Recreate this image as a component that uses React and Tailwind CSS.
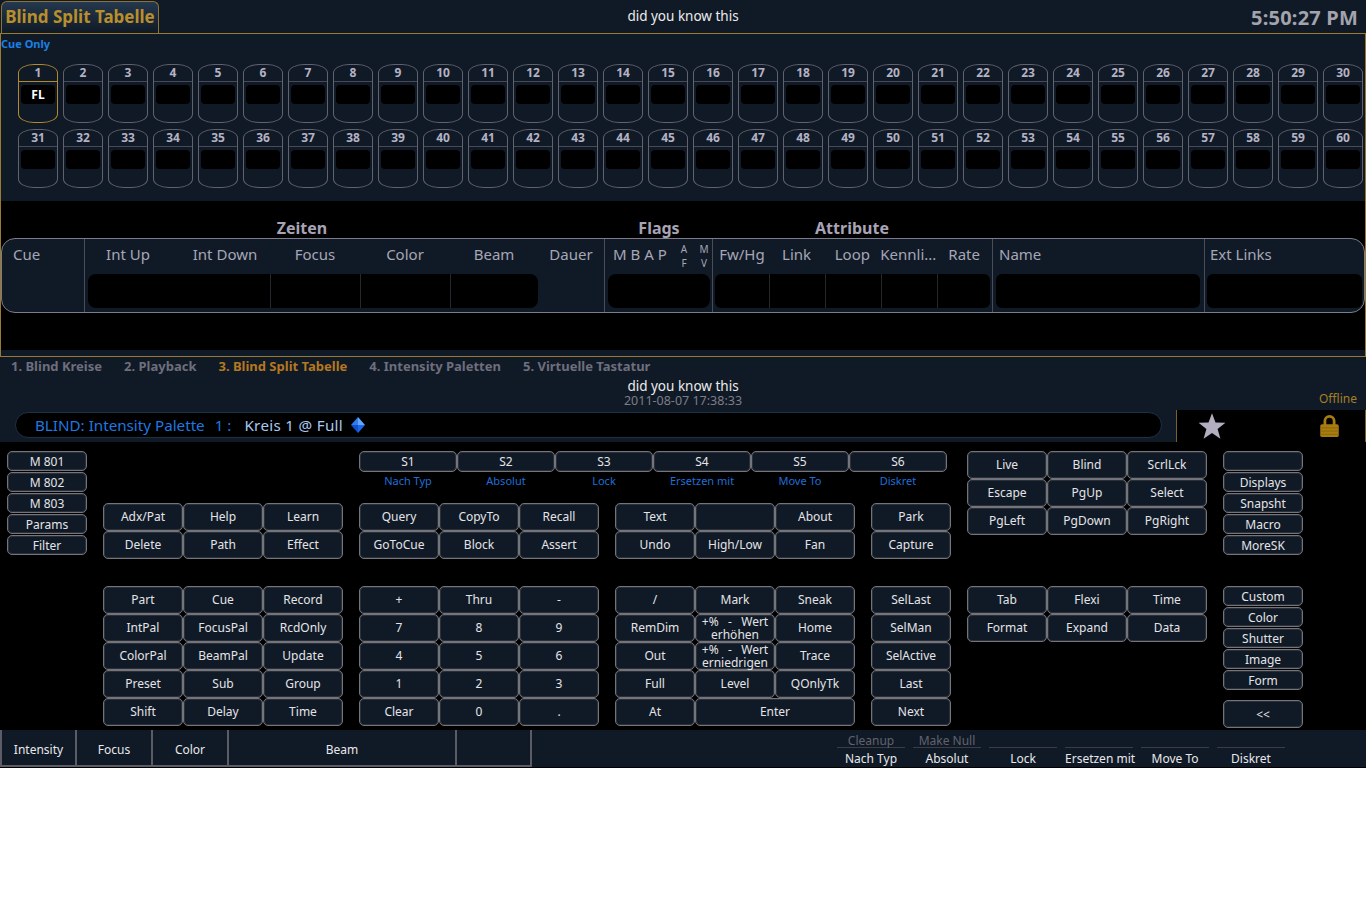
import React from "react";

const CUE_ROWS = [
  Array.from({ length: 30 }, (_, i) => i + 1),
  Array.from({ length: 30 }, (_, i) => i + 31),
];

const CueCell = ({ num, active, label }) => (
  <div
    className={`h-[59px] w-10 rounded-[16px/9px] border ${
      active ? "border-[#b08a2c]" : "border-[#62626e]"
    }`}
  >
    <div
      className={`h-[17px] border-b text-center text-[12px] font-bold leading-[16px] text-[#b4b2c4] ${
        active ? "border-[#b08a2c]" : "border-[#4a4a56]"
      }`}
    >
      {num}
    </div>
    <div className="mx-[2px] mt-[3px] flex h-[19px] items-center justify-center rounded-[4px] bg-black text-[12px] font-bold text-white">
      {label}
    </div>
  </div>
);

const Key = ({ children, className = "" }) => (
  <div
    className={`flex h-full items-center justify-center rounded-[5px] border border-[#74747c] bg-[#101a26] text-center text-[12px] leading-[13px] text-[#e4e4e8] shadow-[inset_0_0_0_1px_#2b3038] ${className}`}
  >
    {children}
  </div>
);

const KeyGrid = ({ keys, cols = "grid-cols-3", width = "w-[240px]" }) => (
  <div className={`grid ${cols} ${width} auto-rows-[28px]`}>
    {keys.map((k, i) => (
      <Key key={i} className={k === "Enter" ? "col-span-2 pb-[2px]" : "pb-[2px]"}>
        {k}
      </Key>
    ))}
  </div>
);

const SmallKeys = ({ keys }) => (
  <div className="flex flex-col gap-[1px]">
    {keys.map((k, i) => (
      <div key={i} className="h-[20px]">
        <Key>{k}</Key>
      </div>
    ))}
  </div>
);

const softKeys = ["S1", "S2", "S3", "S4", "S5", "S6"];
const softLabels = ["Nach Typ", "Absolut", "Lock", "Ersetzen mit", "Move To", "Diskret"];

const WertKey = ({ line2 }) => (
  <span className="block pt-[2px] leading-[13px]">
    +%&nbsp;&nbsp; - &nbsp;&nbsp;Wert
    <br />
    {line2}
  </span>
);

const HeadLabel = ({ className = "", children }) => (
  <div className={`text-[15px] leading-[31px] text-[#a6a6b6] ${className}`}>{children}</div>
);

const CueTable = () => (
  <div className="flex h-[75px] overflow-hidden rounded-[14px] border border-[#7c7c8a] bg-[#101a26]">
    <div className="w-[82px] shrink-0 pl-[11px]">
      <HeadLabel>Cue</HeadLabel>
    </div>

    <div className="w-[520px] shrink-0 border-l border-[#4c4c58] pl-[3px]">
      <div className="flex h-[35px] text-center">
        <HeadLabel className="w-[80px]">Int Up</HeadLabel>
        <HeadLabel className="ml-[12px] w-[90px]">Int Down</HeadLabel>
        <HeadLabel className="w-[90px]">Focus</HeadLabel>
        <HeadLabel className="w-[90px]">Color</HeadLabel>
        <HeadLabel className="w-[88px]">Beam</HeadLabel>
        <HeadLabel className="w-[66px]">Dauer</HeadLabel>
      </div>
      <div className="flex h-[34px] w-[450px] overflow-hidden rounded-[8px] bg-black">
        <div className="w-[182px]" />
        <div className="w-[90px] border-l border-[#26262c]" />
        <div className="w-[90px] border-l border-[#26262c]" />
        <div className="w-[88px] border-l border-[#26262c]" />
      </div>
    </div>

    <div className="w-[108px] shrink-0 border-l border-[#4c4c58] pl-[3px]">
      <div className="flex h-[35px] items-start">
        <HeadLabel className="ml-[5px] w-[60px] whitespace-nowrap">M B A P</HeadLabel>
        <div className="ml-[6px] mt-[3px] w-[10px] text-center text-[10px] leading-[14px] text-[#a6a6b6]">
          A<br />F
        </div>
        <div className="ml-[10px] mt-[3px] w-[10px] text-center text-[10px] leading-[14px] text-[#a6a6b6]">
          M<br />V
        </div>
      </div>
      <div className="h-[34px] w-[102px] rounded-[8px] bg-black" />
    </div>

    <div className="w-[280px] shrink-0 border-l border-[#4c4c58] pl-[2px]">
      <div className="flex h-[35px] text-center">
        {["Fw/Hg", "Link", "Loop", "Kennli...", "Rate"].map((t, i) => (
          <HeadLabel key={t} className={i === 0 ? "w-[54px]" : "w-[56px]"}>
            {t}
          </HeadLabel>
        ))}
      </div>
      <div className="flex h-[34px] w-[275px] rounded-[6px] bg-black">
        <div className="w-[54px]" />
        <div className="w-[56px] border-l border-[#26262c]" />
        <div className="w-[56px] border-l border-[#26262c]" />
        <div className="w-[56px] border-l border-[#26262c]" />
        <div className="w-[53px] border-l border-[#26262c]" />
      </div>
    </div>

    <div className="w-[212px] shrink-0 border-l border-[#4c4c58] pl-[3px]">
      <HeadLabel className="h-[35px] pl-[3px]">Name</HeadLabel>
      <div className="h-[34px] w-[204px] rounded-[6px] bg-black" />
    </div>

    <div className="flex-1 border-l border-[#4c4c58] pl-[2px]">
      <HeadLabel className="h-[35px] pl-[3px]">Ext Links</HeadLabel>
      <div className="h-[34px] w-[155px] rounded-[6px] bg-black" />
    </div>
  </div>
);

export default function App() {
  return (
    <div className="min-h-[913px] bg-white font-['Noto_Sans',sans-serif]">
      <div className="h-[768px] w-[1366px] overflow-hidden border-b border-black bg-[#101a26]">
        {/* top bar */}
        <div className="grid h-[33px] grid-cols-[1fr_auto_1fr] items-start">
          <div className="pl-[1px] pt-[1px]">
            <div className="flex h-[32px] w-[158px] items-center justify-center whitespace-nowrap rounded-t-[6px] border-x border-t border-[#8f7330] bg-gradient-to-b from-[#25384e] to-[#101a26] pb-[2px] text-[17px] font-bold text-[#b98f2c]">
              Blind Split Tabelle
            </div>
          </div>
          <div className="pt-[6px] text-[13.5px] leading-[20px] text-[#ececec]">did you know this</div>
          <div className="pr-2 pt-[6px] text-right text-[20px] font-bold leading-[24px] tracking-[0.2px] text-[#a3a3ad]">
            5:50:27 PM
          </div>
        </div>

        {/* blind split panel */}
        <div className="h-[324px] border border-[#9a7a30]">
          <div className="h-[167px]">
            <div className="pl-0 pt-[3px] text-[11px] font-bold leading-[14px] text-[#1c7fe6]">Cue Only</div>
            <div className="mt-[13px] flex flex-col gap-[6px] pl-[17px]">
              {CUE_ROWS.map((row, r) => (
                <div key={r} className="flex gap-[5px]">
                  {row.map((n) => (
                    <CueCell key={n} num={n} active={n === 1} label={n === 1 ? "FL" : ""} />
                  ))}
                </div>
              ))}
            </div>
          </div>
          <div className="h-[149px] bg-black pt-[17px]">
            <div className="grid h-[20px] grid-cols-[83px_436px_84px_110px_276px] text-center text-[16px] font-bold leading-[20px] text-[#a8a4b6]">
              <div />
              <div>Zeiten</div>
              <div />
              <div>Flags</div>
              <div>Attribute</div>
            </div>
            <CueTable />
          </div>
        </div>

        {/* page tabs + message */}
        <div className="flex h-[20px] gap-[22px] pl-[11px] text-[13px] font-bold leading-[19px] text-[#6e6e7c]">
          <span>1. Blind Kreise</span>
          <span>2. Playback</span>
          <span className="text-[#b5781f]">3. Blind Split Tabelle</span>
          <span>4. Intensity Paletten</span>
          <span>5. Virtuelle Tastatur</span>
        </div>
        <div className="flex h-[33px] flex-col items-center">
          <div className="text-[13.5px] leading-[18px] text-[#ececec]">did you know this</div>
          <div className="mt-[1px] text-[12.5px] leading-[10px] text-[#7d7d86]">2011-08-07 17:38:33</div>
        </div>

        {/* command line */}
        <div className="flex h-[32px] items-end">
          <div className="mb-[4px] ml-[15px] flex h-[26px] w-[1147px] items-center rounded-full border border-[#1e3044] bg-black pl-[19px] text-[15.2px]">
            <span className="text-[#1f78e0]">BLIND: Intensity Palette</span>
            <span className="ml-[10px] text-[#1f78e0]">1 :</span>
            <span className="ml-[13px] tracking-[0.3px] text-[#a9c8f0]">Kreis 1 @ Full</span>
            <svg width="14" height="16" viewBox="0 0 14 16" className="ml-[8px]">
              <path d="M7 0 L14 8 L7 8 Z" fill="#63a5ff" />
              <path d="M7 0 L0 8 L7 8 Z" fill="#2f7bf0" />
              <path d="M0 8 L7 16 L7 8 Z" fill="#0f4fd0" />
              <path d="M14 8 L7 16 L7 8 Z" fill="#1f66e6" />
            </svg>
          </div>
          <div className="relative ml-[14px] flex h-[32px] flex-1 items-center border-x border-[#7a6226] bg-black">
            <div className="absolute right-[8px] top-[-19px] text-[12px] leading-[16px] text-[#a67f24]">Offline</div>
            <svg width="28" height="28" viewBox="0 0 24 24" className="ml-[21px]">
              <path
                d="M12 1 L15 9 L23.5 9.3 L16.8 14.5 L19.2 23 L12 18 L4.8 23 L7.2 14.5 L0.5 9.3 L9 9 Z"
                fill="#b3aec0"
              />
            </svg>
            <svg width="21" height="24" viewBox="0 0 22 26" className="ml-[93px]">
              <path d="M6 12 V7.5 a5 5 0 0 1 10 0 V12" fill="none" stroke="#a87c10" strokeWidth="3" />
              <rect x="1" y="11" width="20" height="14" rx="2" fill="#a87c10" />
              <path d="M1 15 H21 M1 18.5 H21 M1 22 H21" stroke="#8c660c" strokeWidth="1" />
            </svg>
          </div>
        </div>

        {/* keypad */}
        <div className="flex h-[288px] gap-[16px] bg-black pl-[7px] pt-[9px]">
          <div className="w-[80px]">
            <SmallKeys keys={["M 801", "M 802", "M 803", "Params", "Filter"]} />
          </div>

          <div className="w-[240px] pt-[52px]">
            <KeyGrid keys={["Adx/Pat", "Help", "Learn", "Delete", "Path", "Effect"]} />
            <div className="mt-[27px]">
              <KeyGrid
                keys={[
                  "Part", "Cue", "Record",
                  "IntPal", "FocusPal", "RcdOnly",
                  "ColorPal", "BeamPal", "Update",
                  "Preset", "Sub", "Group",
                  "Shift", "Delay", "Time",
                ]}
              />
            </div>
          </div>

          <div className="w-[592px]">
            <div className="grid h-[21px] w-[588px] grid-cols-6">
              {softKeys.map((k) => (
                <Key key={k}>{k}</Key>
              ))}
            </div>
            <div className="grid h-[31px] w-[588px] grid-cols-6 pt-[2px] text-center text-[11px] leading-[14px] text-[#1e6fd8]">
              {softLabels.map((k) => (
                <div key={k}>{k}</div>
              ))}
            </div>
            <div className="flex gap-[16px]">
              <div className="w-[240px]">
                <KeyGrid keys={["Query", "CopyTo", "Recall", "GoToCue", "Block", "Assert"]} />
                <div className="mt-[27px]">
                  <KeyGrid
                    keys={["+", "Thru", "-", "7", "8", "9", "4", "5", "6", "1", "2", "3", "Clear", "0", "."]}
                  />
                </div>
              </div>
              <div className="w-[240px]">
                <KeyGrid keys={["Text", "", "About", "Undo", "High/Low", "Fan"]} />
                <div className="mt-[27px]">
                  <KeyGrid
                    keys={[
                      "/", "Mark", "Sneak",
                      "RemDim", <WertKey line2="erhöhen" />, "Home",
                      "Out", <WertKey line2="erniedrigen" />, "Trace",
                      "Full", "Level", "QOnlyTk",
                      "At", "Enter",
                    ]}
                  />
                </div>
              </div>
              <div className="w-[80px]">
                <KeyGrid cols="grid-cols-1" width="w-[80px]" keys={["Park", "Capture"]} />
                <div className="mt-[27px]">
                  <KeyGrid
                    cols="grid-cols-1"
                    width="w-[80px]"
                    keys={["SelLast", "SelMan", "SelActive", "Last", "Next"]}
                  />
                </div>
              </div>
            </div>
          </div>

          <div className="w-[240px]">
            <KeyGrid
              keys={["Live", "Blind", "ScrlLck", "Escape", "PgUp", "Select", "PgLeft", "PgDown", "PgRight"]}
            />
            <div className="mt-[51px]">
              <KeyGrid keys={["Tab", "Flexi", "Time", "Format", "Expand", "Data"]} />
            </div>
          </div>

          <div className="w-[80px]">
            <SmallKeys keys={["", "Displays", "Snapsht", "Macro", "MoreSK"]} />
            <div className="mt-[31px]">
              <SmallKeys keys={["Custom", "Color", "Shutter", "Image", "Form"]} />
            </div>
            <div className="mt-[10px] h-[28px]">
              <Key>{"<<"}</Key>
            </div>
          </div>
        </div>

        {/* bottom bar */}
        <div className="flex h-[37px]">
          <div className="flex h-[37px] w-[532px] border-b-2 border-[#5c5c66] text-[12px] leading-[39px] text-[#e8e8ec]">
            <div className="w-[77px] border-x-2 border-[#5c5c66] text-center">Intensity</div>
            <div className="w-[76px] border-r-2 border-[#5c5c66] text-center">Focus</div>
            <div className="w-[76px] border-r-2 border-[#5c5c66] text-center">Color</div>
            <div className="w-[228px] border-r-2 border-[#5c5c66] text-center">Beam</div>
            <div className="w-[75px] border-r-2 border-[#5c5c66]" />
          </div>
          <div className="ml-[305px] flex gap-[8px]">
            {["Nach Typ", "Absolut", "Lock", "Ersetzen mit", "Move To", "Diskret"].map((t, i) => (
              <div key={t} className="w-[68px] text-center">
                <div className="h-[18px] whitespace-nowrap border-b border-[#3c3c46] text-[12px] leading-[21px] text-[#62626e]">
                  {i === 0 ? "Cleanup" : i === 1 ? "Make Null" : ""}
                </div>
                <div className="whitespace-nowrap text-[12px] leading-[22px] text-[#e8e8ec]">{t}</div>
              </div>
            ))}
          </div>
        </div>
      </div>
    </div>
  );
}
